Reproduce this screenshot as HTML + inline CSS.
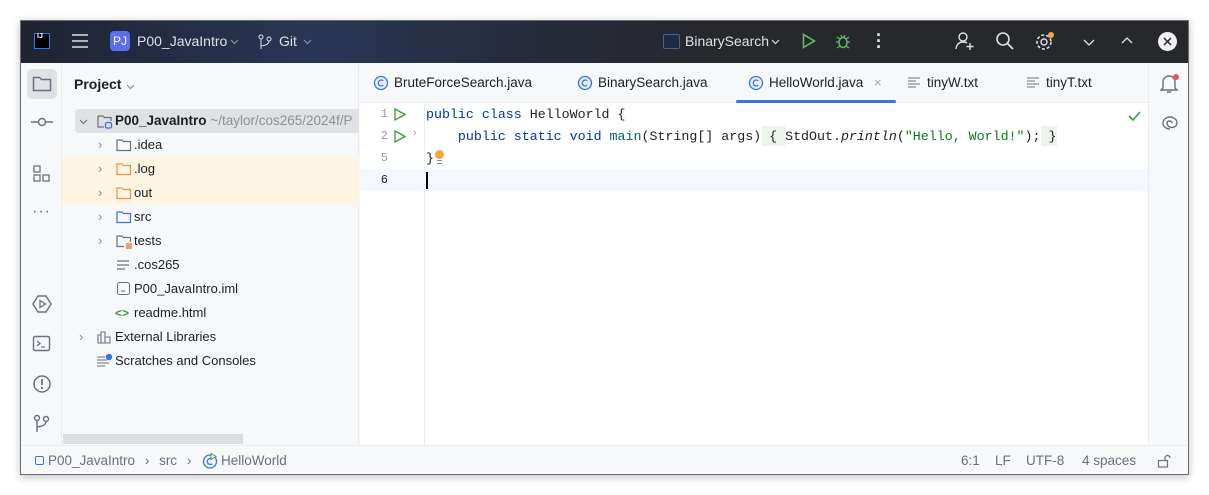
<!DOCTYPE html>
<html><head><style>
*{margin:0;padding:0;box-sizing:border-box}
body{width:1209px;height:495px;background:#fff;font-family:"Liberation Sans",sans-serif;font-size:13px;color:#1e1f22;position:relative;overflow:hidden}
.win{position:absolute;left:20px;top:20px;width:1169px;height:455px;border:1px solid #6b6e75;background:#f7f8fa;box-shadow:0 2px 8px rgba(0,0,0,.25);overflow:hidden}
.title{position:absolute;left:0;top:0;width:1169px;height:42px;background:linear-gradient(90deg,#1f2330 0%,#2a3656 25%,#252a38 45%,#27282c 60%,#27282c 100%);color:#dfe1e5}
.a{position:absolute}
.side{position:absolute;left:0;top:42px;width:41px;height:382px;background:#f7f8fa;border-right:1px solid #ebecf0}
.proj{position:absolute;left:41px;top:42px;width:297px;height:382px;background:#f7f8fa;border-right:1px solid #ebecf0}
.tabs{position:absolute;left:339px;top:42px;width:788px;height:40px;background:#f7f8fa;border-bottom:1px solid #ebecf0}
.ed{position:absolute;left:339px;top:82px;width:788px;height:342px;background:#fff}
.right{position:absolute;left:1127px;top:42px;width:41px;height:382px;background:#f7f8fa;border-left:1px solid #ebecf0}
.status{position:absolute;left:0;top:424px;width:1169px;height:31px;background:#f7f8fa;border-top:1px solid #ebecf0;color:#6c707e}
.row{position:absolute;left:0;height:24px;line-height:24px;width:297px;white-space:nowrap}
.code{font-family:"Liberation Mono",monospace;font-size:13.3px;white-space:pre;position:absolute;left:66px;height:22px;line-height:22px}
.ln{font-family:"Liberation Mono",monospace;font-size:12px;color:#9a9da6;position:absolute;left:16px;width:12px;text-align:right;line-height:22px}
.kw{color:#0033b3}.fn{color:#00627a}.st{color:#067d17}
.tab{position:absolute;top:0;height:40px;line-height:40px;color:#1e1f22;font-size:13.5px}
svg{position:absolute}
</style></head><body>
<div class="win">
<div class="title">
 <div class="a" style="left:13px;top:12px;width:16px;height:16px;background:#000;border:1px solid #3574f0"></div>
 <div class="a" style="left:16px;top:12px;color:#fff;font-size:7px;font-weight:bold">IJ</div>
 <svg style="left:51px;top:13px" width="16" height="14"><path d="M0 1H16M0 7H16M0 13H16" stroke="#dfe1e5" stroke-width="1.5"/></svg>
 <div class="a" style="left:89px;top:10px;width:20px;height:20px;border-radius:4px;background:#5a6ff0;color:#fff;font-size:12px;line-height:20px;text-align:center">PJ</div>
 <div class="a" style="left:116px;top:12px;font-size:14px">P00_JavaIntro</div>
 <svg style="left:209px;top:18px" width="9" height="6"><path d="M1 1L4.5 4.5L8 1" fill="none" stroke="#8c8f96" stroke-width="1.2"/></svg>
 <svg style="left:237px;top:13px" width="14" height="16"><circle cx="3" cy="3" r="2" fill="none" stroke="#dfe1e5"/><circle cx="11" cy="5" r="2" fill="none" stroke="#dfe1e5"/><path d="M3 5V15M11 7Q11 11 3 12" fill="none" stroke="#dfe1e5"/></svg>
 <div class="a" style="left:258px;top:12px;font-size:14px">Git</div>
 <svg style="left:282px;top:18px" width="9" height="6"><path d="M1 1L4.5 4.5L8 1" fill="none" stroke="#8c8f96" stroke-width="1.2"/></svg>
 <div class="a" style="left:642px;top:13px;width:17px;height:15px;border:1.5px solid #4a5f8a;border-radius:2px;background:#1f2a44"></div>
 <div class="a" style="left:664px;top:12px;font-size:14px">BinarySearch</div>
 <svg style="left:750px;top:18px" width="9" height="6"><path d="M1 1L4.5 4.5L8 1" fill="none" stroke="#dfe1e5" stroke-width="1.2"/></svg>
 <svg style="left:781px;top:12px" width="14" height="16"><path d="M1.5 1.5L12.5 8L1.5 14.5Z" fill="none" stroke="#5fb865" stroke-width="1.6"/></svg>
 <svg style="left:814px;top:12px" width="16" height="16"><ellipse cx="8" cy="9.5" rx="4" ry="5" fill="none" stroke="#5fb865" stroke-width="1.5"/><path d="M1 9H4M12 9H15M2 4L5 6M14 4L11 6M2 15L5 13M14 15L11 13M6 2L7 4M10 2L9 4" stroke="#5fb865" stroke-width="1.3"/></svg>
 <div class="a" style="left:855px;top:11px;width:3px;color:#dfe1e5;font-size:18px;line-height:6px;font-weight:bold">·<br>·<br>·</div>
 <svg style="left:934px;top:10px" width="20" height="20"><circle cx="8" cy="6" r="4" fill="none" stroke="#dfe1e5" stroke-width="1.4"/><path d="M1 18Q2 11 8 11Q11 11 12 12M15 12V19M11.5 15.5H18.5" fill="none" stroke="#dfe1e5" stroke-width="1.4"/></svg>
 <svg style="left:974px;top:10px" width="20" height="20"><circle cx="8" cy="8" r="6" fill="none" stroke="#dfe1e5" stroke-width="1.6"/><path d="M12.5 12.5L18 18" stroke="#dfe1e5" stroke-width="1.8"/></svg>
 <svg style="left:1013px;top:10px" width="22" height="22"><circle cx="10" cy="11" r="3" fill="none" stroke="#dfe1e5" stroke-width="1.4"/><circle cx="10" cy="11" r="7" fill="none" stroke="#dfe1e5" stroke-width="1.6" stroke-dasharray="3 2"/><circle cx="17" cy="4" r="3" fill="#f2a93b"/></svg>
 <svg style="left:1062px;top:18px" width="12" height="7"><path d="M1 1L6 6L11 1" fill="none" stroke="#dfe1e5" stroke-width="1.3"/></svg>
 <svg style="left:1100px;top:15px" width="12" height="8"><path d="M1 7L6 2L11 7" fill="none" stroke="#dfe1e5" stroke-width="1.3"/></svg>
 <div class="a" style="left:1137px;top:11px;width:19px;height:19px;border-radius:50%;background:#f2f2f2"></div>
 <svg style="left:1142px;top:16px" width="9" height="9"><path d="M1 1L8 8M8 1L1 8" stroke="#27282c" stroke-width="1.5"/></svg>
</div>
<div class="side">
 <div class="a" style="left:6px;top:6px;width:30px;height:30px;border-radius:5px;background:#dfe1e5"></div>
 <svg style="left:11px;top:12px" width="20" height="18"><path d="M1.5 2.5H7.5L9.5 4.5H18.5V15.5H1.5Z" fill="none" stroke="#6c707e" stroke-width="1.5"/></svg>
 <svg style="left:10px;top:54px" width="22" height="10"><circle cx="11" cy="5" r="3.5" fill="none" stroke="#6c707e" stroke-width="1.4"/><path d="M0 5H7.5M14.5 5H22" stroke="#6c707e" stroke-width="1.4"/></svg>
 <svg style="left:12px;top:102px" width="18" height="18"><rect x="1" y="1" width="6" height="6" fill="none" stroke="#6c707e" stroke-width="1.3"/><rect x="1" y="10" width="6" height="6" fill="none" stroke="#6c707e" stroke-width="1.3"/><rect x="10" y="10" width="6" height="6" fill="none" stroke="#6c707e" stroke-width="1.3"/></svg>
 <div class="a" style="left:11px;top:140px;color:#6c707e;font-size:16px;letter-spacing:1px">···</div>
 <svg style="left:11px;top:231px" width="20" height="20"><path d="M6 2H14L19 10L14 18H6L1 10Z" fill="none" stroke="#6c707e" stroke-width="1.4"/><path d="M8 6.5L13.5 10L8 13.5Z" fill="none" stroke="#6c707e" stroke-width="1.3"/></svg>
 <svg style="left:11px;top:271px" width="20" height="20"><rect x="1.5" y="2.5" width="16" height="14" rx="1.5" fill="none" stroke="#6c707e" stroke-width="1.4"/><path d="M5 7L8 9.5L5 12M9 13H13" fill="none" stroke="#6c707e" stroke-width="1.3"/></svg>
 <svg style="left:11px;top:311px" width="20" height="20"><circle cx="10" cy="10" r="8" fill="none" stroke="#6c707e" stroke-width="1.5"/><path d="M10 5V11" stroke="#6c707e" stroke-width="1.8"/><circle cx="10" cy="14" r="1.1" fill="#6c707e"/></svg>
 <svg style="left:12px;top:351px" width="18" height="20"><circle cx="4" cy="4" r="2.5" fill="none" stroke="#6c707e" stroke-width="1.4"/><circle cx="13" cy="5" r="2.5" fill="none" stroke="#6c707e" stroke-width="1.4"/><path d="M4 6.5V18M13 7.5Q13 12 4 13" fill="none" stroke="#6c707e" stroke-width="1.4"/></svg>
</div>
<div class="proj">
 <div class="a" style="left:12px;top:13px;font-size:14px;font-weight:bold">Project</div>
 <svg style="left:64px;top:21px" width="9" height="6"><path d="M1 1L4.5 4.5L8 1" fill="none" stroke="#8c8f96" stroke-width="1.2"/></svg>
 <div class="a" style="left:13px;top:46px;width:284px;height:24px;background:#dfe1e5;border-radius:4px 0 0 4px"></div>
 <div class="a" style="left:0;top:94px;width:297px;height:48px;background:#fdf5e1"></div>
 <div class="row" style="top:46px"><svg style="left:17px;top:10px" width="9" height="6"><path d="M1 1L4.5 4.5L8 1" fill="none" stroke="#6c707e" stroke-width="1.2"/></svg><svg style="left:35px;top:5px" width="16" height="15"><path d="M1 2H6L7.5 3.5H14V7M7 13H1V2" fill="none" stroke="#6c707e" stroke-width="1.2"/><rect x="8.5" y="8.5" width="6" height="5.5" rx="1.5" fill="none" stroke="#3574f0" stroke-width="1.3"/></svg><span class="a" style="left:53px;font-weight:bold;font-size:13.5px">P00_JavaIntro <span style="font-weight:normal;color:#8c8f96">~/taylor/cos265/2024f/P</span></span></div>
 <div class="row" style="top:70px"><span class="a" style="left:36px;color:#8c8f96">›</span><svg style="left:54px;top:5px" width="16" height="14"><path d="M1 2H6L7.5 3.5H14.5V12.5H1Z" fill="none" stroke="#6c707e" stroke-width="1.2"/></svg><span class="a" style="left:72px">.idea</span></div>
 <div class="row" style="top:94px"><span class="a" style="left:36px;color:#8c8f96">›</span><svg style="left:54px;top:5px" width="16" height="14"><path d="M1 2H6L7.5 3.5H14.5V12.5H1Z" fill="none" stroke="#e8914a" stroke-width="1.2"/></svg><span class="a" style="left:72px">.log</span></div>
 <div class="row" style="top:118px"><span class="a" style="left:36px;color:#8c8f96">›</span><svg style="left:54px;top:5px" width="16" height="14"><path d="M1 2H6L7.5 3.5H14.5V12.5H1Z" fill="none" stroke="#e8914a" stroke-width="1.2"/></svg><span class="a" style="left:72px">out</span></div>
 <div class="row" style="top:142px"><span class="a" style="left:36px;color:#8c8f96">›</span><svg style="left:54px;top:5px" width="16" height="14"><path d="M1 2H6L7.5 3.5H14.5V12.5H1Z" fill="none" stroke="#3574f0" stroke-width="1.2"/></svg><span class="a" style="left:72px">src</span></div>
 <div class="row" style="top:166px"><span class="a" style="left:36px;color:#8c8f96">›</span><svg style="left:54px;top:5px" width="16" height="15"><path d="M8 12.5H1V2H6L7.5 3.5H14.5V8" fill="none" stroke="#6c707e" stroke-width="1.2"/><path d="M10 10H16M10 12H16M10 14H16" stroke="#e06c1f" stroke-width="1.2"/></svg><span class="a" style="left:72px">tests</span></div>
 <div class="row" style="top:190px"><svg style="left:55px;top:7px" width="12" height="11"><path d="M0 1H12M0 5H12M0 9H8" stroke="#6c707e" stroke-width="1.2"/></svg><span class="a" style="left:72px">.cos265</span></div>
 <div class="row" style="top:214px"><svg style="left:55px;top:5px" width="13" height="14"><rect x=".5" y=".5" width="12" height="12" rx="2" fill="none" stroke="#6c707e"/><path d="M4 9H8" stroke="#6c707e"/></svg><span class="a" style="left:72px">P00_JavaIntro.iml</span></div>
 <div class="row" style="top:238px"><span class="a" style="left:53px;color:#3a9a3f;font-weight:bold;font-size:12px">&lt;&gt;</span><span class="a" style="left:72px">readme.html</span></div>
 <div class="row" style="top:262px"><span class="a" style="left:17px;color:#8c8f96">›</span><svg style="left:35px;top:5px" width="16" height="14"><path d="M1 5H4V13H1ZM4 2H8V13H4ZM8 7H13V13H8Z" fill="none" stroke="#6c707e" stroke-width="1.1"/></svg><span class="a" style="left:53px">External Libraries</span></div>
 <div class="row" style="top:286px"><svg style="left:35px;top:4px" width="16" height="14"><path d="M0 4H8M0 7H10M0 10H12M0 13H8" stroke="#6c707e" stroke-width="1.1"/><circle cx="12" cy="4" r="3.2" fill="#3574f0"/></svg><span class="a" style="left:53px">Scratches and Consoles</span></div>
 <div class="a" style="left:1px;top:371px;width:180px;height:10px;background:#dcdddf"></div>
</div>
<div class="tabs">
 <svg style="left:13px;top:12px" width="16" height="16"><circle cx="8" cy="8" r="6.5" fill="#e7efff" stroke="#3574f0" stroke-width="1.3"/><path d="M10.3 5.8A3 3 0 1 0 10.3 10.2" fill="none" stroke="#3574f0" stroke-width="1.3"/></svg>
 <div class="tab" style="left:34px">BruteForceSearch.java</div>
 <svg style="left:217px;top:12px" width="16" height="16"><circle cx="8" cy="8" r="6.5" fill="#e7efff" stroke="#3574f0" stroke-width="1.3"/><path d="M10.3 5.8A3 3 0 1 0 10.3 10.2" fill="none" stroke="#3574f0" stroke-width="1.3"/></svg>
 <div class="tab" style="left:238px">BinarySearch.java</div>
 <svg style="left:388px;top:12px" width="16" height="16"><circle cx="8" cy="8" r="6.5" fill="#e7efff" stroke="#3574f0" stroke-width="1.3"/><path d="M10.3 5.8A3 3 0 1 0 10.3 10.2" fill="none" stroke="#3574f0" stroke-width="1.3"/></svg>
 <div class="tab" style="left:409px">HelloWorld.java</div>
 <div class="tab" style="left:514px;color:#a0a3aa;font-size:13px">×</div>
 <div class="a" style="left:376px;top:37px;width:160px;height:3px;background:#3574f0;border-radius:2px"></div>
 <svg style="left:548px;top:14px" width="12" height="11"><path d="M0 1H12M0 4H8M0 7H12M0 10H8" stroke="#6c707e"/></svg>
 <div class="tab" style="left:567px">tinyW.txt</div>
 <svg style="left:667px;top:14px" width="12" height="11"><path d="M0 1H12M0 4H8M0 7H12M0 10H8" stroke="#6c707e"/></svg>
 <div class="tab" style="left:686px">tinyT.txt</div>
</div>
<div class="ed">
 <div class="a" style="left:64px;top:0;width:1px;height:342px;background:#ebecf0"></div>
 <div class="a" style="left:0;top:66px;width:788px;height:22px;background:#f5f8fe"></div>
 <div class="ln" style="top:0">1</div><div class="ln" style="top:22px">2</div><div class="ln" style="top:44px">5</div><div class="ln" style="top:66px;color:#1e1f22">6</div>
 <svg style="left:34px;top:5px" width="12" height="13"><path d="M1 1L11 6.5L1 12Z" fill="none" stroke="#3a9a3f" stroke-width="1.3"/></svg>
 <svg style="left:34px;top:27px" width="12" height="13"><path d="M1 1L11 6.5L1 12Z" fill="none" stroke="#3a9a3f" stroke-width="1.3"/></svg>
 <span class="a" style="left:53px;top:24px;color:#a0a3aa;font-size:11px">›</span>
 <div class="a" style="left:402px;top:23px;width:23px;height:20px;background:#eef5ea"></div>
 <div class="a" style="left:681px;top:23px;width:16px;height:20px;background:#eef5ea"></div>
 <div class="code" style="top:1px"><span class="kw">public class</span> HelloWorld {</div>
 <div class="code" style="top:23px">    <span class="kw">public static void</span> <span class="fn">main</span>(String[] args) { StdOut.<i>println</i>(<span class="st">"Hello, World!"</span>); }</div>
 <div class="code" style="top:45px">}</div>
 <div class="a" style="left:75px;top:47px;width:9px;height:9px;border-radius:50%;background:#f2a93b"></div>
 <div class="a" style="left:77px;top:57px;width:5px;height:4px;border-top:1px solid #888;border-bottom:1px solid #888"></div>
 <div class="a" style="left:66px;top:69px;width:2px;height:17px;background:#000"></div>
 <svg style="left:768px;top:8px" width="13" height="10"><path d="M1 5L5 9L12 1" fill="none" stroke="#3a9a3f" stroke-width="1.6"/></svg>
</div>
<div class="right">
 <svg style="left:11px;top:10px" width="20" height="22"><path d="M3 15V9A6 6 0 0 1 15 9V15L17 17H1ZM7 19H11" fill="none" stroke="#6c707e" stroke-width="1.4"/><circle cx="16" cy="4" r="3" fill="#e55765"/></svg>
 <svg style="left:11px;top:50px" width="20" height="20"><path d="M10 16A7 6 0 1 1 17 10A5 4.5 0 1 1 7 10A2.5 2 0 1 1 12 10" fill="none" stroke="#6c707e" stroke-width="1.4"/></svg>
</div>
<div class="status">
 <div class="a" style="left:14px;top:10px;width:9px;height:9px;border:1.3px solid #3574f0;border-radius:2px"></div>
 <div class="a" style="left:27px;top:7px;font-size:13.5px">P00_JavaIntro <span style="margin:0 6px">›</span> src <span style="margin:0 6px">›</span></div>
 <svg style="left:181px;top:7px" width="16" height="16"><circle cx="8" cy="8.5" r="6.5" fill="none" stroke="#3574f0" stroke-width="1.3"/><path d="M10.3 6.3A3 3 0 1 0 10.3 10.7" fill="none" stroke="#3574f0" stroke-width="1.3"/><path d="M9 0.5L14 3.5L9 6.5Z" fill="#fff" stroke="#3a9a3f"/></svg>
 <div class="a" style="left:200px;top:7px;font-size:13.5px">HelloWorld</div>
 <div class="a" style="left:940px;top:7px;font-size:13.5px">6:1</div>
 <div class="a" style="left:974px;top:7px;font-size:13.5px">LF</div>
 <div class="a" style="left:1005px;top:7px;font-size:13.5px">UTF-8</div>
 <div class="a" style="left:1061px;top:7px;font-size:13.5px">4 spaces</div>
 <svg style="left:1136px;top:8px" width="14" height="14"><rect x="1.5" y="6.5" width="9" height="6.5" fill="none" stroke="#6c707e" stroke-width="1.2"/><path d="M8 6.5V4A2.5 2.5 0 0 1 13 4" fill="none" stroke="#6c707e" stroke-width="1.2"/></svg>
</div>
</div>
</body></html>
